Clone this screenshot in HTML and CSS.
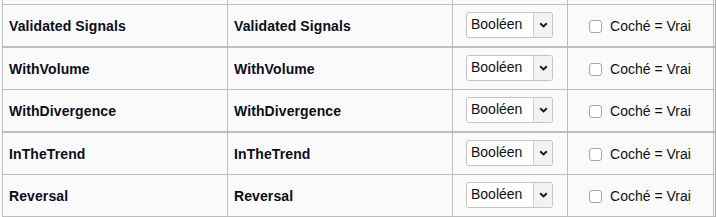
FILE: index.html
```html
<!DOCTYPE html>
<html lang="fr">
<head>
<meta charset="utf-8">
<title>Signaux</title>
<link rel="stylesheet" href="styles.css">
</head>
<body>
<div class="frame">
  <div class="grid">
    <div class="row cut">
      <div class="cell c1"></div><div class="cell c2"></div><div class="cell c3"></div><div class="cell c4"></div>
    </div>
    <div class="row thick">
      <div class="cell c1 name">Validated Signals</div>
      <div class="cell c2 name">Validated Signals</div>
      <div class="cell c3"><div class="select"><span class="sel-text">Booléen</span><span class="sel-btn"><svg width="9" height="6" viewBox="0 0 9 6"><path d="M1.2 1.2 L4.5 4.4 L7.8 1.2" fill="none" stroke="#1a1a1a" stroke-width="2"/></svg></span></div></div>
      <div class="cell c4"><label class="check"><input type="checkbox"><span>Coché = Vrai</span></label></div>
    </div>
    <div class="row">
      <div class="cell c1 name">WithVolume</div>
      <div class="cell c2 name">WithVolume</div>
      <div class="cell c3"><div class="select"><span class="sel-text">Booléen</span><span class="sel-btn"><svg width="9" height="6" viewBox="0 0 9 6"><path d="M1.2 1.2 L4.5 4.4 L7.8 1.2" fill="none" stroke="#1a1a1a" stroke-width="2"/></svg></span></div></div>
      <div class="cell c4"><label class="check"><input type="checkbox"><span>Coché = Vrai</span></label></div>
    </div>
    <div class="row thick">
      <div class="cell c1 name">WithDivergence</div>
      <div class="cell c2 name">WithDivergence</div>
      <div class="cell c3"><div class="select"><span class="sel-text">Booléen</span><span class="sel-btn"><svg width="9" height="6" viewBox="0 0 9 6"><path d="M1.2 1.2 L4.5 4.4 L7.8 1.2" fill="none" stroke="#1a1a1a" stroke-width="2"/></svg></span></div></div>
      <div class="cell c4"><label class="check"><input type="checkbox"><span>Coché = Vrai</span></label></div>
    </div>
    <div class="row">
      <div class="cell c1 name">InTheTrend</div>
      <div class="cell c2 name">InTheTrend</div>
      <div class="cell c3"><div class="select"><span class="sel-text">Booléen</span><span class="sel-btn"><svg width="9" height="6" viewBox="0 0 9 6"><path d="M1.2 1.2 L4.5 4.4 L7.8 1.2" fill="none" stroke="#1a1a1a" stroke-width="2"/></svg></span></div></div>
      <div class="cell c4"><label class="check"><input type="checkbox"><span>Coché = Vrai</span></label></div>
    </div>
    <div class="row">
      <div class="cell c1 name">Reversal</div>
      <div class="cell c2 name">Reversal</div>
      <div class="cell c3"><div class="select"><span class="sel-text">Booléen</span><span class="sel-btn"><svg width="9" height="6" viewBox="0 0 9 6"><path d="M1.2 1.2 L4.5 4.4 L7.8 1.2" fill="none" stroke="#1a1a1a" stroke-width="2"/></svg></span></div></div>
      <div class="cell c4"><label class="check"><input type="checkbox"><span>Coché = Vrai</span></label></div>
    </div>
  </div>
</div>
</body>
</html>
```

FILE: styles.css
```css
html, body {
  margin: 0;
  padding: 0;
  background: #fafafa;
}
body {
  font-family: "Liberation Sans", Arial, sans-serif;
  font-size: 14px;
  color: #111;
}
.frame {
  width: 715px;
  height: 217px;
  border-right: 1px solid #a8a8a8;
  overflow: hidden;
}
.grid {
  margin-left: 2px;
  width: 712px;
  border-left: 1px solid #bdbdbd;
}
.row {
  display: flex;
  height: 41px;
  border-bottom: 1px solid #bdbdbd;
}
.row.cut {
  height: 4px;
}
.row.thick {
  border-bottom: 2px solid #bdbdbd;
}
.cell {
  display: flex;
  align-items: center;
  border-right: 1px solid #bdbdbd;
  box-sizing: border-box;
}
.c1, .c2 { width: 225px; }
.c3 { width: 115px; padding-left: 13px; }
.c4 { width: 146px; justify-content: center; padding-right: 1px; }
.name {
  padding-left: 6px;
  font-weight: bold;
  letter-spacing: 0.1px;
  color: #0d0d1a;
}
.select {
  display: flex;
  width: 87px;
  height: 26px;
  box-sizing: border-box;
  border: 1px solid #c4c4c4;
  border-radius: 3px;
  background: #fff;
  overflow: hidden;
  margin-top: -1px;
}
.sel-text {
  flex: 1;
  padding-left: 4px;
  line-height: 22px;
  color: #111;
}
.sel-btn {
  width: 18px;
  border-left: 1px solid #d2d2d2;
  background: #f2f2f2;
  display: flex;
  align-items: center;
  justify-content: center;
}
.check {
  display: flex;
  align-items: center;
  gap: 8px;
  color: #111;
}
.check input {
  appearance: none;
  -webkit-appearance: none;
  margin: 0;
  width: 13px;
  height: 13px;
  border: 1px solid #a6a6a6;
  border-radius: 3px;
  background: #fff;
  box-sizing: border-box;
  position: relative;
  top: 1px;
}
```
